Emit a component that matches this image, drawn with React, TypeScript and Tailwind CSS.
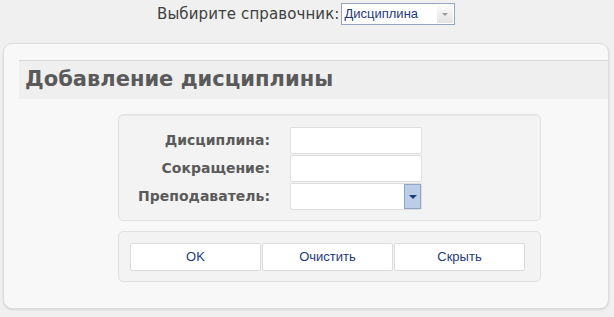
import React from 'react';

const labelFont = { fontFamily: '"DejaVu Sans", Verdana, sans-serif' };

const App = () => {
  const fields = [
    { label: 'Дисциплина:', type: 'input' },
    { label: 'Сокращение:', type: 'input' },
    { label: 'Преподаватель:', type: 'select' },
  ];

  const buttons = ['OK', 'Очистить', 'Скрыть'];

  return (
    <div className="h-[317px] w-[614px] overflow-hidden bg-[#f0f0f0] font-['Liberation_Sans',Arial,sans-serif]">
      {/* top selector */}
      <div className="flex h-[27px] items-center pl-[157px] pt-[1px]">
        <span className="font-['DejaVu_Sans',sans-serif] text-[15px] tracking-[0.1px] text-[#3f3f3f]">
          Выбирите справочник:
        </span>
        <div className="ml-[2px] flex h-[22px] w-[114px] items-center border border-[#95a5bd] bg-white">
          <span className="flex-1 pl-[2px] text-[13px] text-[#1e3a7b]">Дисциплина</span>
          <div className="mr-[1px] flex h-[18px] w-[16px] items-center justify-center bg-gradient-to-b from-[#fbfbfb] to-[#e4e4e4]">
            <div className="h-0 w-0 border-x-[3px] border-t-[3px] border-x-transparent border-t-[#9a9a9a]" />
          </div>
        </div>
      </div>

      {/* main panel */}
      <div className="ml-[3px] mt-[16px] h-[266px] w-[606px] rounded-[9px] border border-[#dcdcdc] bg-[#f8f8f8] shadow-[0_1px_2px_rgba(0,0,0,0.12)]">
        <div className="ml-[15px] mt-[16px] flex h-[39px] items-center border-t border-[#d6d6d6] bg-[#efefef] pl-[6px]">
          <h1 style={labelFont} className="text-[21px] font-bold tracking-[0px] text-[#5a5a5a]">
            Добавление дисциплины
          </h1>
        </div>

        {/* form box */}
        <div className="ml-[114px] mt-[15px] w-[423px] rounded-[5px] border border-[#e0e0e0] bg-[#f3f3f3] pb-[10px] pt-[11px] shadow-[inset_0_1px_1px_rgba(0,0,0,0.04)]">
          {fields.map((f, i) => (
            <div key={i} className="flex h-[28px] items-center">
              <div style={labelFont} className="w-[151px] text-right text-[14px] font-bold text-[#5a5a5a]">
                {f.label}
              </div>
              <div className="ml-[20px] flex h-[27px] w-[132px] items-stretch rounded-[2px] border border-[#dedede] bg-white">
                {f.type === 'select' && (
                  <div className="ml-auto flex w-[17px] items-center justify-center border border-[#8ea5c8] bg-[#bccde8]">
                    <div className="mt-[1px] h-0 w-0 border-x-[4px] border-t-[4px] border-x-transparent border-t-[#1e3a7b]" />
                  </div>
                )}
              </div>
            </div>
          ))}
        </div>

        {/* button box */}
        <div className="ml-[114px] mt-[10px] flex h-[51px] w-[423px] items-center gap-[1px] rounded-[5px] border border-[#e0e0e0] bg-[#f3f3f3] pl-[11px]">
          {buttons.map((b) => (
            <button
              key={b}
              className="h-[28px] w-[131px] rounded-[2px] border border-[#dcdcdc] bg-white text-[13px] text-[#1e3a7b]"
            >
              {b}
            </button>
          ))}
        </div>
      </div>
    </div>
  );
};

export default App;
